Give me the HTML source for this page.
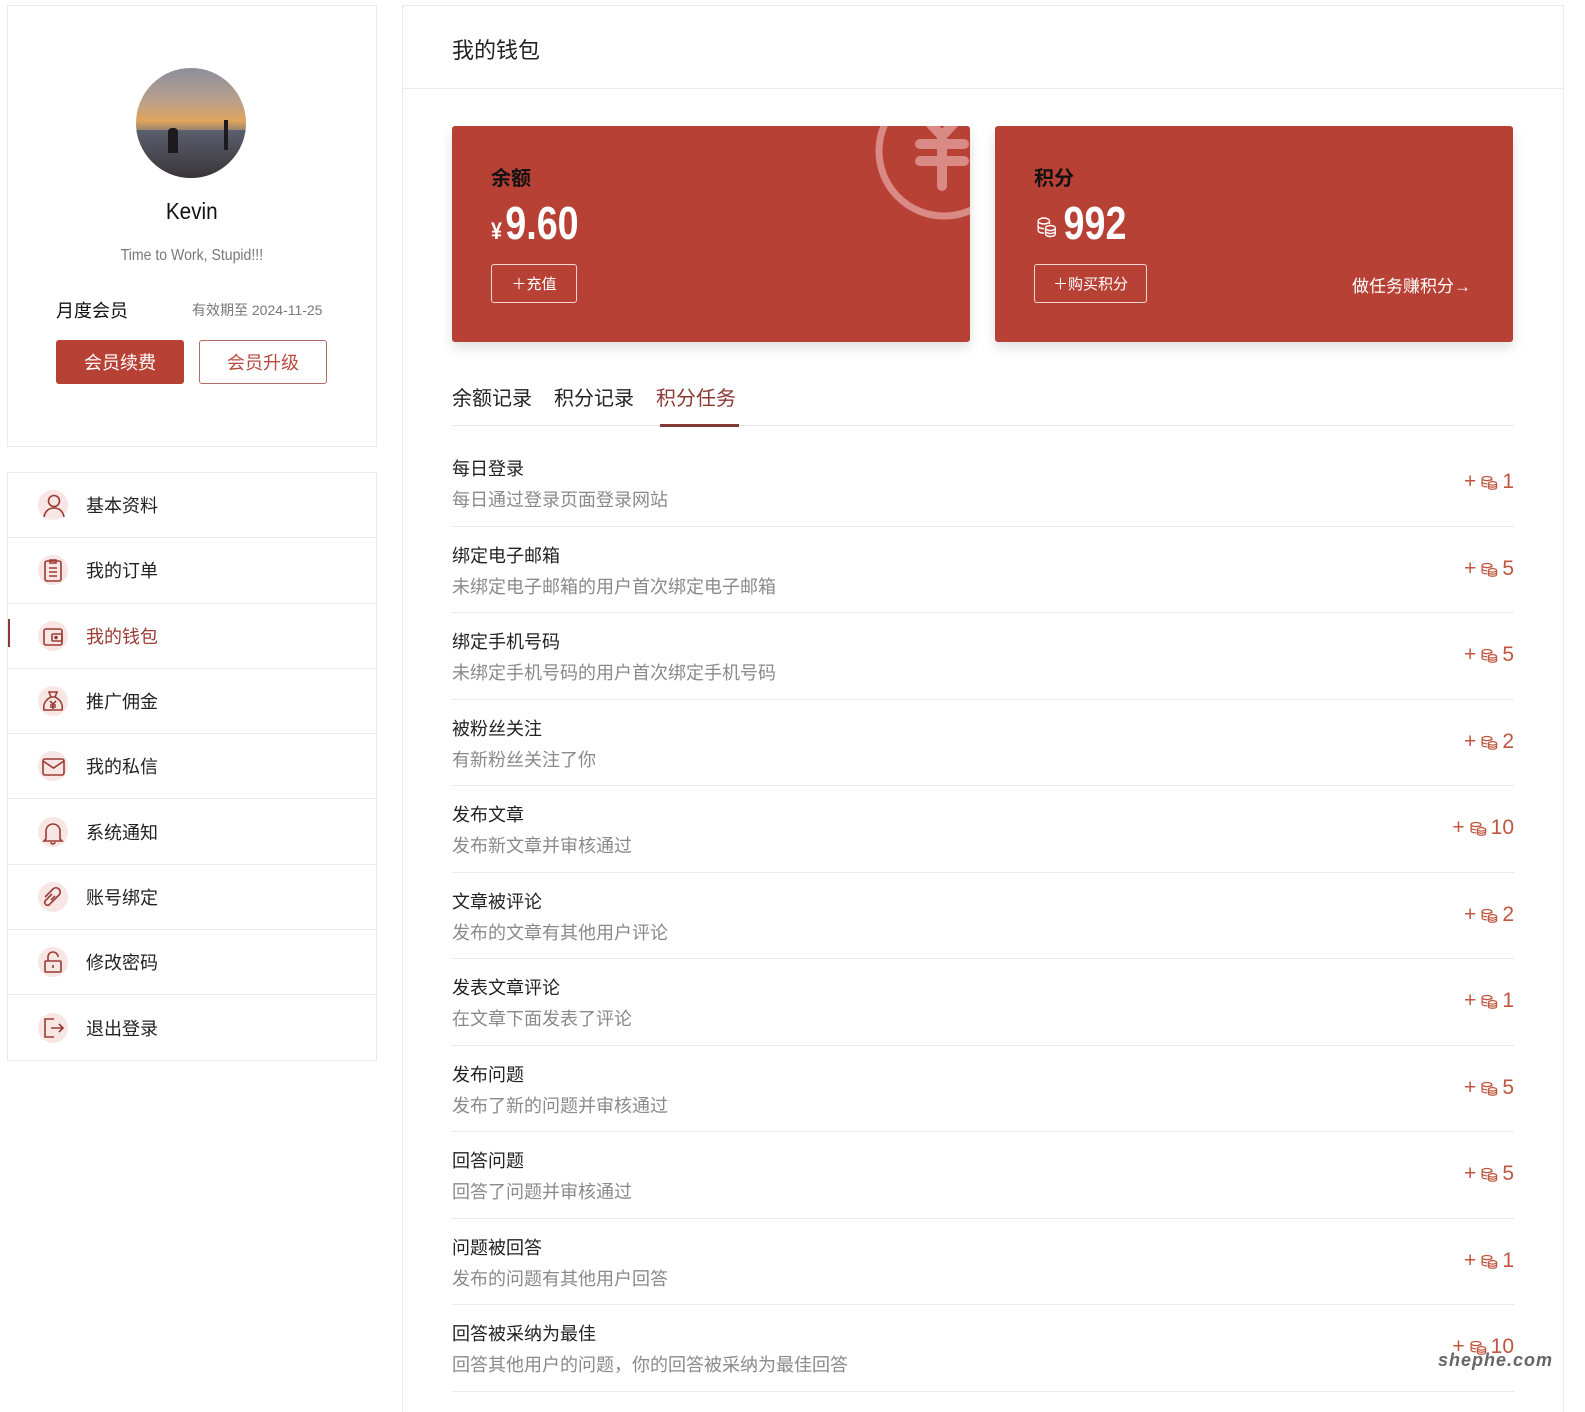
<!DOCTYPE html>
<html style="overflow:hidden;height:1412px"><head><meta charset="utf-8">
<style>
*{box-sizing:border-box;margin:0;padding:0}
body{width:1585px;height:1412px;background:#fff;font-family:"Liberation Sans","Noto Sans CJK SC",sans-serif;color:#222;position:relative;overflow:hidden}
.abs{position:absolute}
.card1{left:7px;top:5px;width:370px;height:442px;border:1px solid #eaeaea}
.avatar{left:136px;top:68px;width:110px;height:110px;border-radius:50%;background:linear-gradient(#8c8d9c 0%,#b9a08c 30%,#e0a45c 48%,#6d6f7c 62%,#3c3a42 80%,#5a4a44 100%);overflow:hidden}
.menu{left:7px;top:472px;width:370px;height:589px;border:1px solid #eaeaea}
.mi{height:65.3px;border-bottom:1px solid #eaeaea;display:flex;align-items:center;padding-left:30px;font-size:18px;position:relative}
.mi:last-child{border-bottom:none}
.mi .ic{width:30px;height:30px;border-radius:50%;background:#f7e6e4;margin-right:18px;display:flex;align-items:center;justify-content:center;margin-left:0}
.main{left:402px;top:5px;width:1162px;height:1407px;border:1px solid #eaeaea;border-bottom:none}
.hd{left:402px;top:88px;width:1162px;height:1px;background:#eaeaea}
.wc{top:126px;width:518px;height:216px;background:#b84136;border-radius:3px;box-shadow:0 6px 12px rgba(0,0,0,.12);overflow:hidden;color:#fff}
.wc .lbl{position:absolute;left:39px;top:36px;font-size:20px;font-weight:bold;color:#111}
.wc .num{position:absolute;left:39px;top:70px;font-size:46px;font-weight:bold;display:flex;align-items:baseline;transform:scaleX(0.82);transform-origin:left}
.btn{position:absolute;left:39px;top:137px;height:39px;border:1px solid #f3d6d2;border-radius:3px;font-size:15px;display:flex;align-items:center;justify-content:center}
.tabs{left:452px;top:382px;font-size:20px}
.row{height:86.5px;border-bottom:1px solid #eaeaea;position:relative}
.row .t{position:absolute;left:0;top:15px;font-size:18px;color:#222}
.row .d{position:absolute;left:0;top:46px;font-size:18px;color:#8a8a8a}
.row .v{position:absolute;right:0;top:30px;font-size:21px;color:#c0563f;display:flex;align-items:center;gap:4px}
</style></head><body>
<div class="abs card1"></div>
<div class="abs avatar">
<div style="position:absolute;left:0;top:62px;width:110px;height:48px;background:linear-gradient(#5b5f6e,#3a3438)"></div>
<div style="position:absolute;left:32px;top:60px;width:10px;height:25px;background:#1c1a1e;border-radius:4px 4px 0 0"></div>
<div style="position:absolute;left:88px;top:52px;width:4px;height:30px;background:#1c1a1e"></div>
</div>
<div class="abs" style="left:7px;top:198px;width:370px;text-align:center;font-size:23px;color:#111"><span style="display:inline-block;transform:scaleX(0.9)">Kevin</span></div>
<div class="abs" style="left:7px;top:247px;width:370px;text-align:center;font-size:16px;color:#777"><span style="display:inline-block;transform:scaleX(0.88)">Time to Work, Stupid!!!</span></div>
<div class="abs" style="left:56px;top:297px;font-size:18px;color:#111">月度会员</div>
<div class="abs" style="left:192px;top:300px;font-size:14px;color:#777">有效期至 2024-11-25</div>
<div class="abs" style="left:56px;top:340px;width:128px;height:44px;background:#b84136;border-radius:3px;color:#fff;font-size:18px;display:flex;align-items:center;justify-content:center">会员续费</div>
<div class="abs" style="left:199px;top:340px;width:128px;height:44px;border:1px solid #b86a62;border-radius:3px;color:#b84a40;font-size:18px;display:flex;align-items:center;justify-content:center">会员升级</div>

<div class="abs menu">
<div class="mi"><span class="ic"><svg width="26" height="26" viewBox="0 0 26 26" fill="none" stroke="#9b3b33" stroke-width="1.6"><circle cx="14" cy="9" r="5.5"/><path d="M4 25c1-6 5-9 10-9s9 3 10 9"/></svg></span>基本资料</div>
<div class="mi"><span class="ic"><svg width="26" height="26" viewBox="0 0 26 26" fill="none" stroke="#9b3b33" stroke-width="1.6"><rect x="5" y="4" width="16" height="20" rx="2"/><path d="M10 3h6v3h-6zM9 11h8M9 15h8M9 19h8"/></svg></span>我的订单</div>
<div class="mi" style="color:#9b3b33"><span class="abs" style="left:0;top:15px;width:2px;height:28px;background:#8a3a32"></span><span class="ic"><svg width="26" height="26" viewBox="0 0 26 26" fill="none" stroke="#9b3b33" stroke-width="1.6"><rect x="4" y="6" width="18" height="16" rx="2"/><rect x="12" y="11" width="10" height="7" rx="1"/><circle cx="16" cy="14.5" r="1" fill="#9b3b33"/></svg></span>我的钱包</div>
<div class="mi"><span class="ic"><svg width="26" height="26" viewBox="0 0 26 26" fill="none" stroke="#9b3b33" stroke-width="1.6"><path d="M9 4h8l-2 5h-4z"/><path d="M11 9C5 12 3 17 4 22h18c1-5-1-10-7-13"/><path d="M10 13l3 3 3-3M13 16v5M10 17h6M10 19h6"/></svg></span>推广佣金</div>
<div class="mi"><span class="ic"><svg width="26" height="26" viewBox="0 0 26 26" fill="none" stroke="#9b3b33" stroke-width="1.6"><rect x="3" y="6" width="21" height="16" rx="2"/><path d="M3 8l10.5 7L24 8"/></svg></span>我的私信</div>
<div class="mi"><span class="ic"><svg width="26" height="26" viewBox="0 0 26 26" fill="none" stroke="#9b3b33" stroke-width="1.6"><path d="M6 20V12a7 7 0 0 1 14 0v8l2 2H4z"/><path d="M11 23a2 2 0 0 0 4 0"/></svg></span>系统通知</div>
<div class="mi"><span class="ic"><svg width="26" height="26" viewBox="0 0 26 26" fill="none" stroke="#9b3b33" stroke-width="1.6"><path d="M12 10l-7 7a3 3 0 0 0 4 4l10-10a4 4 0 0 0-6-6l-8 8"/><path d="M15 12l-4 4"/></svg></span>账号绑定</div>
<div class="mi"><span class="ic"><svg width="26" height="26" viewBox="0 0 26 26" fill="none" stroke="#9b3b33" stroke-width="1.6"><rect x="5" y="12" width="16" height="11" rx="1"/><path d="M8 12V8a5 5 0 0 1 10 0"/><path d="M13 16v3"/></svg></span>修改密码</div>
<div class="mi"><span class="ic"><svg width="26" height="26" viewBox="0 0 26 26" fill="none" stroke="#9b3b33" stroke-width="1.6"><path d="M14 4H5v18h9"/><path d="M11 13h12M19 9l4 4-4 4"/></svg></span>退出登录</div>
</div>

<div class="abs main"></div>
<div class="abs hd"></div>
<div class="abs" style="left:452px;top:33px;font-size:22px;color:#222">我的钱包</div>

<div class="abs wc" style="left:452px">
<svg class="abs" style="left:412px;top:-40px" width="160" height="150" viewBox="0 0 160 150"><circle cx="80" cy="65" r="65" fill="none" stroke="#d98a84" stroke-width="7"/><path d="M52 22l26 28 26-28M78 50v50M56 58h44M56 75h44" fill="none" stroke="#d98a84" stroke-width="10" stroke-linecap="round"/></svg>
<div class="lbl">余额</div>
<div class="num"><span style="font-size:24px;margin-right:4px">¥</span>9.60</div>
<div class="btn" style="width:86px;top:138px">＋充值</div>
</div>
<div class="abs wc" style="left:995px">
<div class="lbl">积分</div>
<div class="num"><svg width="30" height="26" viewBox="0 0 26 26" fill="none" stroke="#fff" stroke-width="1.5" style="margin-right:6px"><ellipse cx="10" cy="8" rx="7" ry="3"/><path d="M3 8v9c0 2 3 3 7 3M17 8v3"/><path d="M3 12.5c0 2 3 3 7 3"/><ellipse cx="18" cy="15" rx="6" ry="2.5"/><path d="M12 15v6c0 1.4 3 2.5 6 2.5s6-1 6-2.5v-6M12 18c0 1.4 3 2.5 6 2.5s6-1 6-2.5"/></svg>992</div>
<div class="btn" style="width:113px;top:138px">＋购买积分</div>
<div class="abs" style="right:42px;top:146px;font-size:17px">做任务赚积分→</div>
</div>

<div class="abs tabs"><span style="margin-right:22px">余额记录</span><span style="margin-right:22px">积分记录</span><span style="color:#8a3a32">积分任务</span></div>
<div class="abs" style="left:452px;top:425px;width:1062px;height:1px;background:#e6e6e6"></div>
<div class="abs" style="left:660px;top:424px;width:79px;height:3px;background:#7e3a33"></div>

<div class="abs" style="left:452px;top:440px;width:1062px">
<div class="row"><div class="t">每日登录</div><div class="d">每日通过登录页面登录网站</div><div class="v">+ <svg width="18" height="18" viewBox="0 0 26 26" fill="none" stroke="#c0563f" stroke-width="1.8"><ellipse cx="10" cy="8" rx="7" ry="3"/><path d="M3 8v9c0 2 3 3 7 3M17 8v3M3 12.5c0 2 3 3 7 3"/><ellipse cx="18" cy="15" rx="6" ry="2.5"/><path d="M12 15v6c0 1.4 3 2.5 6 2.5s6-1 6-2.5v-6M12 18c0 1.4 3 2.5 6 2.5s6-1 6-2.5"/></svg> 1</div></div>
<div class="row"><div class="t">绑定电子邮箱</div><div class="d">未绑定电子邮箱的用户首次绑定电子邮箱</div><div class="v">+ <svg width="18" height="18" viewBox="0 0 26 26" fill="none" stroke="#c0563f" stroke-width="1.8"><ellipse cx="10" cy="8" rx="7" ry="3"/><path d="M3 8v9c0 2 3 3 7 3M17 8v3M3 12.5c0 2 3 3 7 3"/><ellipse cx="18" cy="15" rx="6" ry="2.5"/><path d="M12 15v6c0 1.4 3 2.5 6 2.5s6-1 6-2.5v-6M12 18c0 1.4 3 2.5 6 2.5s6-1 6-2.5"/></svg> 5</div></div>
<div class="row"><div class="t">绑定手机号码</div><div class="d">未绑定手机号码的用户首次绑定手机号码</div><div class="v">+ <svg width="18" height="18" viewBox="0 0 26 26" fill="none" stroke="#c0563f" stroke-width="1.8"><ellipse cx="10" cy="8" rx="7" ry="3"/><path d="M3 8v9c0 2 3 3 7 3M17 8v3M3 12.5c0 2 3 3 7 3"/><ellipse cx="18" cy="15" rx="6" ry="2.5"/><path d="M12 15v6c0 1.4 3 2.5 6 2.5s6-1 6-2.5v-6M12 18c0 1.4 3 2.5 6 2.5s6-1 6-2.5"/></svg> 5</div></div>
<div class="row"><div class="t">被粉丝关注</div><div class="d">有新粉丝关注了你</div><div class="v">+ <svg width="18" height="18" viewBox="0 0 26 26" fill="none" stroke="#c0563f" stroke-width="1.8"><ellipse cx="10" cy="8" rx="7" ry="3"/><path d="M3 8v9c0 2 3 3 7 3M17 8v3M3 12.5c0 2 3 3 7 3"/><ellipse cx="18" cy="15" rx="6" ry="2.5"/><path d="M12 15v6c0 1.4 3 2.5 6 2.5s6-1 6-2.5v-6M12 18c0 1.4 3 2.5 6 2.5s6-1 6-2.5"/></svg> 2</div></div>
<div class="row"><div class="t">发布文章</div><div class="d">发布新文章并审核通过</div><div class="v">+ <svg width="18" height="18" viewBox="0 0 26 26" fill="none" stroke="#c0563f" stroke-width="1.8"><ellipse cx="10" cy="8" rx="7" ry="3"/><path d="M3 8v9c0 2 3 3 7 3M17 8v3M3 12.5c0 2 3 3 7 3"/><ellipse cx="18" cy="15" rx="6" ry="2.5"/><path d="M12 15v6c0 1.4 3 2.5 6 2.5s6-1 6-2.5v-6M12 18c0 1.4 3 2.5 6 2.5s6-1 6-2.5"/></svg> 10</div></div>
<div class="row"><div class="t">文章被评论</div><div class="d">发布的文章有其他用户评论</div><div class="v">+ <svg width="18" height="18" viewBox="0 0 26 26" fill="none" stroke="#c0563f" stroke-width="1.8"><ellipse cx="10" cy="8" rx="7" ry="3"/><path d="M3 8v9c0 2 3 3 7 3M17 8v3M3 12.5c0 2 3 3 7 3"/><ellipse cx="18" cy="15" rx="6" ry="2.5"/><path d="M12 15v6c0 1.4 3 2.5 6 2.5s6-1 6-2.5v-6M12 18c0 1.4 3 2.5 6 2.5s6-1 6-2.5"/></svg> 2</div></div>
<div class="row"><div class="t">发表文章评论</div><div class="d">在文章下面发表了评论</div><div class="v">+ <svg width="18" height="18" viewBox="0 0 26 26" fill="none" stroke="#c0563f" stroke-width="1.8"><ellipse cx="10" cy="8" rx="7" ry="3"/><path d="M3 8v9c0 2 3 3 7 3M17 8v3M3 12.5c0 2 3 3 7 3"/><ellipse cx="18" cy="15" rx="6" ry="2.5"/><path d="M12 15v6c0 1.4 3 2.5 6 2.5s6-1 6-2.5v-6M12 18c0 1.4 3 2.5 6 2.5s6-1 6-2.5"/></svg> 1</div></div>
<div class="row"><div class="t">发布问题</div><div class="d">发布了新的问题并审核通过</div><div class="v">+ <svg width="18" height="18" viewBox="0 0 26 26" fill="none" stroke="#c0563f" stroke-width="1.8"><ellipse cx="10" cy="8" rx="7" ry="3"/><path d="M3 8v9c0 2 3 3 7 3M17 8v3M3 12.5c0 2 3 3 7 3"/><ellipse cx="18" cy="15" rx="6" ry="2.5"/><path d="M12 15v6c0 1.4 3 2.5 6 2.5s6-1 6-2.5v-6M12 18c0 1.4 3 2.5 6 2.5s6-1 6-2.5"/></svg> 5</div></div>
<div class="row"><div class="t">回答问题</div><div class="d">回答了问题并审核通过</div><div class="v">+ <svg width="18" height="18" viewBox="0 0 26 26" fill="none" stroke="#c0563f" stroke-width="1.8"><ellipse cx="10" cy="8" rx="7" ry="3"/><path d="M3 8v9c0 2 3 3 7 3M17 8v3M3 12.5c0 2 3 3 7 3"/><ellipse cx="18" cy="15" rx="6" ry="2.5"/><path d="M12 15v6c0 1.4 3 2.5 6 2.5s6-1 6-2.5v-6M12 18c0 1.4 3 2.5 6 2.5s6-1 6-2.5"/></svg> 5</div></div>
<div class="row"><div class="t">问题被回答</div><div class="d">发布的问题有其他用户回答</div><div class="v">+ <svg width="18" height="18" viewBox="0 0 26 26" fill="none" stroke="#c0563f" stroke-width="1.8"><ellipse cx="10" cy="8" rx="7" ry="3"/><path d="M3 8v9c0 2 3 3 7 3M17 8v3M3 12.5c0 2 3 3 7 3"/><ellipse cx="18" cy="15" rx="6" ry="2.5"/><path d="M12 15v6c0 1.4 3 2.5 6 2.5s6-1 6-2.5v-6M12 18c0 1.4 3 2.5 6 2.5s6-1 6-2.5"/></svg> 1</div></div>
<div class="row"><div class="t">回答被采纳为最佳</div><div class="d">回答其他用户的问题，你的回答被采纳为最佳回答</div><div class="v">+ <svg width="18" height="18" viewBox="0 0 26 26" fill="none" stroke="#c0563f" stroke-width="1.8"><ellipse cx="10" cy="8" rx="7" ry="3"/><path d="M3 8v9c0 2 3 3 7 3M17 8v3M3 12.5c0 2 3 3 7 3"/><ellipse cx="18" cy="15" rx="6" ry="2.5"/><path d="M12 15v6c0 1.4 3 2.5 6 2.5s6-1 6-2.5v-6M12 18c0 1.4 3 2.5 6 2.5s6-1 6-2.5"/></svg> 10</div></div>
</div>
<div class="abs" style="left:1438px;top:1350px;font-size:18px;font-style:italic;font-weight:bold;color:#666;letter-spacing:1px">shephe.com</div>
</body></html>
